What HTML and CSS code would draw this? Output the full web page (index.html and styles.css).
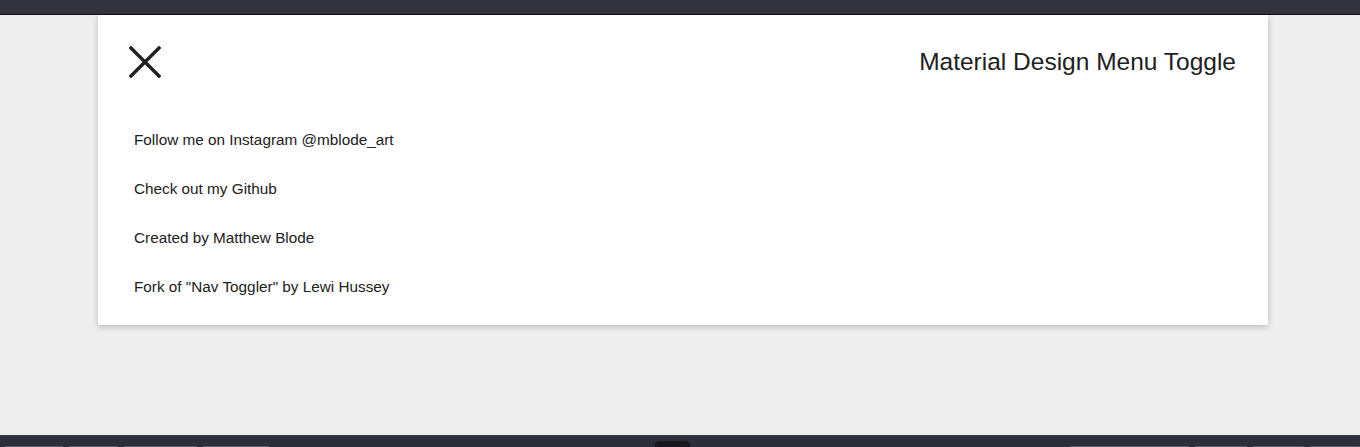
FILE: index.html
```html
<!DOCTYPE html>
<html lang="en">
<head>
  <meta charset="UTF-8">
  <meta name="viewport" content="width=device-width, initial-scale=1.0">
  <title>Material Design Menu Toggle</title>
  <link rel="stylesheet" href="styles.css">
</head>
<body>
  <div class="topbar"></div>

  <main class="stage">
    <div class="card">
      <div class="card-head">
        <button class="toggle" aria-label="Close menu">
          <svg width="32" height="32" viewBox="0 0 32 32">
            <path d="M2 2 L30 30 M30 2 L2 30" stroke="#212121" stroke-width="3.4" stroke-linecap="square" fill="none"/>
          </svg>
        </button>
        <h1 class="title">Material Design Menu Toggle</h1>
      </div>

      <ul class="menu">
        <li><a href="#">Follow me on Instagram @mblode_art</a></li>
        <li><a href="#">Check out my Github</a></li>
        <li><a href="#">Created by Matthew Blode</a></li>
        <li><a href="#">Fork of "Nav Toggler" by Lewi Hussey</a></li>
      </ul>
    </div>
  </main>

  <div class="bottombar">
    <div class="tabs">
      <span class="tab" style="width:58px"></span>
      <span class="tab" style="width:49px"></span>
      <span class="tab" style="width:73px"></span>
      <span class="tab" style="width:66px"></span>
    </div>
    <span class="handle"></span>
    <div class="tabs">
      <span class="tab" style="width:119px"></span>
      <span class="tab" style="width:52px"></span>
      <span class="tab" style="width:51px"></span>
      <span class="tab" style="width:50px"></span>
    </div>
  </div>
</body>
</html>
```

FILE: styles.css
```css
body {
  margin: 0;
  height: 447px;
  display: flex;
  flex-direction: column;
  background: #eeeeee;
  font-family: "Liberation Sans", Arial, sans-serif;
  color: #212121;
  overflow: hidden;
}

.topbar {
  height: 14px;
  background: #31333f;
  border-bottom: 1px solid #111216;
}

.stage {
  flex: 1;
  padding: 0 92px 0 98px;
}

.card {
  background: #fff;
  box-shadow: 0 2px 6px rgba(0, 0, 0, 0.22);
  padding: 31px 32px 14px 31px;
}

.card-head {
  display: flex;
  justify-content: space-between;
  align-items: center;
  height: 32px;
}

.toggle {
  padding: 0;
  border: 0;
  background: none;
  width: 32px;
  height: 32px;
  cursor: pointer;
}

.toggle svg {
  display: block;
}

.title {
  margin: 0;
  font-size: 24.5px;
  font-weight: 400;
  color: #212121;
}

.menu {
  list-style: none;
  margin: 0;
  padding: 37px 0 0 5px;
}

.menu li {
  height: 49px;
  display: flex;
  align-items: center;
}

.menu a {
  font-size: 15.3px;
  color: #212121;
  text-decoration: none;
}

.bottombar {
  height: 11px;
  background: #2c2f3b;
  border-top: 1px solid #3d404c;
  display: flex;
  justify-content: space-between;
  align-items: flex-end;
  padding: 0 0 0 5px;
  position: relative;
}

.tabs {
  display: flex;
  gap: 6px;
}

.tab {
  height: 1px;
  background: #5a5d69;
  border-radius: 2px 2px 0 0;
}

.handle {
  position: absolute;
  left: 655px;
  bottom: 0;
  width: 35px;
  height: 6px;
  background: #17181d;
  border-radius: 4px 4px 0 0;
}
```
